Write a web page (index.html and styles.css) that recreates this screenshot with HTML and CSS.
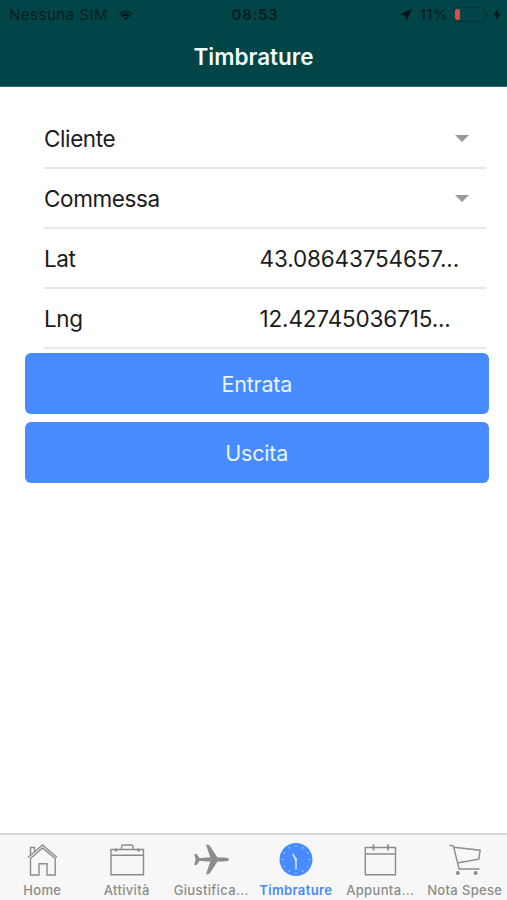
FILE: index.html
```html
<!DOCTYPE html>
<html lang="it">
<head>
  <meta charset="UTF-8">
  <meta name="viewport" content="width=device-width, initial-scale=1.0">
  <title>Timbrature</title>
  <link rel="stylesheet" href="styles.css">
</head>
<body>
  <!-- Header -->
  <header class="header">
    <div class="status-bar">
      <div class="status-left">
        <span class="carrier">Nessuna SIM</span>
        <svg class="wifi" width="16" height="12" viewBox="0 0 16 12">
          <path d="M1 4.2C5 .5 11 .5 15 4.2L13.5 5.8C10.3 3 5.7 3 2.5 5.8Z" opacity=".6"/>
          <path d="M3.3 6.6C6 4.2 10 4.2 12.7 6.6L11.2 8.1C9.3 6.6 6.7 6.6 4.8 8.1Z"/>
          <path d="M5.7 9C7 7.9 9 7.9 10.3 9L8 11.4Z"/>
        </svg>
      </div>
      <span class="clock">08:53</span>
      <div class="status-right">
        <svg class="location" width="14" height="14" viewBox="0 0 14 14">
          <path d="M13 .8L7.6 13L6.4 7.5L.8 6.5Z"/>
        </svg>
        <span class="percent">11%</span>
        <span class="battery"><span class="battery-level"></span></span>
        <svg class="bolt" width="8" height="13" viewBox="0 0 8 13">
          <path d="M5.5 0L.5 7.2H3.5L2.4 13L7.6 5.5H4.6Z"/>
        </svg>
      </div>
    </div>
    <h1>Timbrature</h1>
  </header>

  <!-- Form -->
  <main class="content">
    <div class="list">
      <div class="item">
        <span class="label">Cliente</span>
        <span class="arrow"></span>
      </div>
      <div class="item">
        <span class="label">Commessa</span>
        <span class="arrow"></span>
      </div>
      <div class="item">
        <span class="label">Lat</span>
        <span class="value">43.08643754657...</span>
      </div>
      <div class="item">
        <span class="label">Lng</span>
        <span class="value">12.42745036715...</span>
      </div>
    </div>
    <div class="buttons">
      <button type="button">Entrata</button>
      <button type="button">Uscita</button>
    </div>
  </main>

  <!-- Tab bar -->
  <nav class="tabs">
    <a class="tab">
      <svg width="36" height="36" viewBox="0 0 36 36">
        <path d="M4 15.5L18.5 3L33 15.5M6.500 13.2V5.5H10.5V9.5"/>
        <path d="M6.5 16.500V33H15V21.7H23V33H31.2V16.5L18.5 6Z"/>
      </svg>
      <span>Home</span>
    </a>
    <a class="tab">
      <svg width="36" height="36" viewBox="0 0 36 36">
        <path d="M2 7.5H34.5V32.7H2ZM2 13.2H34.5M12.5 7.5V4.500Q12.5 3 14 3H22.5Q24 3 24 4.5V7.5"/>
        <path d="M7 6.5V9.5M29.5 6.5V9.5" stroke-width="2.5"/>
      </svg>
      <span>Attività</span>
    </a>
    <a class="tab">
      <svg width="36" height="36" viewBox="0 0 36 36">
        <path class="filled" d="M36 17.5C36 18.7 34 19.4 31 19.4H24.5L17 31C16.3 32 15.5 32.2 13 32.2L17.3 19.6C12.5 19.5 8.5 19.2 6.6 18.8L3.6 23H1.2L2.6 17.5L1.2 12H3.6L6.6 16.2C8.5 15.8 12.5 15.5 17.3 15.4L13 2.8C15.5 2.8 16.3 3 17 4L24.5 15.6H31C34 15.6 36 16.3 36 17.5Z"/>
      </svg>
      <span>Giustifica...</span>
    </a>
    <a class="tab active">
      <svg width="36" height="36" viewBox="0 0 36 36">
        <circle class="filled" cx="18" cy="17.5" r="16.5"/>
        <circle class="ticks" cx="18" cy="17.5" r="13.5" pathLength="120"/>
        <path class="hands" d="M14.7 12L18 17.5V27.5"/>
        <circle class="pin" cx="17.8" cy="17.3" r="1.2"/>
      </svg>
      <span>Timbrature</span>
    </a>
    <a class="tab">
      <svg width="36" height="36" viewBox="0 0 36 36">
        <path d="M3.3 5.5H33.5V32.7H3.3ZM3.3 12H33.5"/>
        <path d="M11.5 2.5V8.5M26 2.5V8.5" stroke-width="1.8"/>
      </svg>
      <span>Appunta...</span>
    </a>
    <a class="tab">
      <svg width="36" height="36" viewBox="0 0 36 36">
        <path d="M2.5 3.2L6.5 4L12 27H32.5M7 5.3L33.2 8.2L31.8 17.2L10 21"/>
        <circle class="filled" cx="10.8" cy="31" r="2"/>
        <circle class="filled" cx="28.6" cy="31" r="2"/>
      </svg>
      <span>Nota Spese</span>
    </a>
  </nav>
</body>
</html>
```

FILE: styles.css
```css
* {
  box-sizing: border-box;
}

body {
  font-family: Inter, "Liberation Sans", sans-serif;
  margin: 0;
  height: 100vh;
  display: flex;
  flex-direction: column;
  background-color: #fff;
  color: #1c1c1c;
  overflow: hidden;
}

/* Header */
.header {
  height: 87px;
  background-color: #024549;
  border-bottom: 1px solid #39696c;
}

.status-bar {
  display: grid;
  grid-template-columns: 1fr auto 1fr;
  align-items: center;
  height: 29px;
  padding: 0 6px 0 9px;
  font-size: 15px;
  color: #031c22;
}

.status-bar svg {
  fill: #02131a;
}

.status-left,
.status-right {
  display: flex;
  align-items: center;
}

.status-right {
  justify-content: flex-end;
}

.carrier {
  letter-spacing: 0.5px;
}

.wifi {
  margin-left: 10px;
}

.clock {
  font-weight: 600;
  letter-spacing: 0.7px;
}

.location {
  margin-right: 7px;
}

.percent {
  letter-spacing: 0.4px;
}

.battery {
  position: relative;
  width: 32px;
  height: 15px;
  margin: 0 8px 0 5px;
  padding: 1px;
  border: 1px solid #06323a;
  border-radius: 4px;
}

/* battery tip */
.battery::after {
  content: "";
  position: absolute;
  right: -4px;
  top: 4px;
  width: 2px;
  height: 5px;
  border-radius: 0 2px 2px 0;
  background-color: #06323a;
}

.battery-level {
  display: block;
  width: 5px;
  height: 11px;
  border-radius: 2px;
  background-color: #e44b48;
}

h1 {
  margin: 13px 0 0;
  font-size: 22.5px;
  font-weight: 600;
  line-height: 30px;
  text-align: center;
  color: #f0fbfc;
}

/* Form */
.content {
  flex: 1;
  padding: 22px 18.5px 0 25px;
}

.list {
  padding: 0 3px 0 19px;
}

.item {
  display: flex;
  align-items: center;
  justify-content: space-between;
  height: 60px;
  padding-right: 17px;
  border-bottom: 2px solid #e6e6e6;
  font-size: 22.5px;
}

.label {
  letter-spacing: -0.4px;
}

.value {
  width: 209px;
  letter-spacing: -0.15px;
  white-space: nowrap;
}

.arrow {
  border: 7px solid transparent;
  border-top-color: #999;
  border-bottom: 0;
}

.buttons {
  display: flex;
  flex-direction: column;
  gap: 8px;
  margin-top: 4px;
}

button {
  height: 61px;
  border: none;
  border-radius: 6px;
  background-color: #488aff;
  color: #e6f5ff;
  font-family: inherit;
  font-size: 21.5px;
  letter-spacing: -0.2px;
}

/* Tab bar */
.tabs {
  display: grid;
  grid-template-columns: repeat(6, 1fr);
  height: 67px;
  border-top: 2px solid #d9d9d9;
  background-color: #f7f7f7;
}

.tab {
  display: flex;
  flex-direction: column;
  align-items: center;
  padding-top: 7px;
  font-size: 13px;
  font-weight: 500;
  line-height: 16px;
  letter-spacing: 0.35px;
  white-space: nowrap;
  color: #8c8c8c;
}

.tab span {
  margin-top: 4px;
}

.tab svg {
  fill: none;
  stroke: currentColor;
  stroke-width: 1.4;
}

.tab .filled {
  fill: currentColor;
  stroke: none;
}

.tab .ticks {
  stroke: #c4daff;
  stroke-width: 1.5;
  stroke-dasharray: 1.5 8.5;
  stroke-dashoffset: 0.75;
}

.tab .hands {
  stroke: #dbe8ff;
  stroke-width: 1.5;
}

.tab .pin {
  fill: #dbe8ff;
  stroke: none;
}

.tab.active {
  color: #488aff;
  font-weight: 600;
}
```
